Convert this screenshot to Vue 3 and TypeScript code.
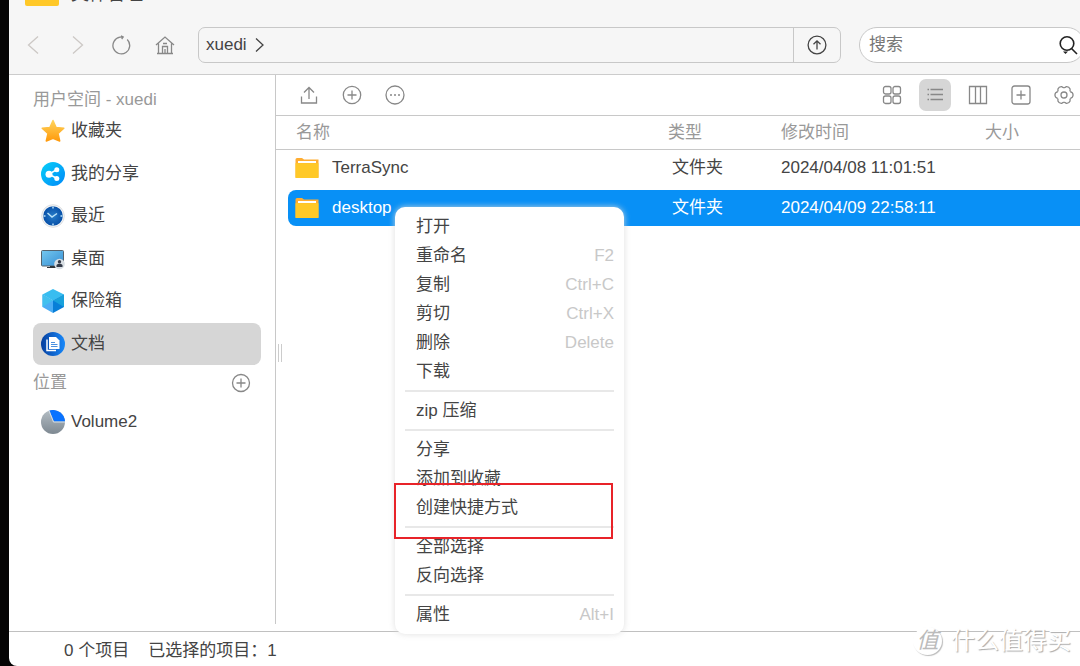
<script setup lang="ts">
import { ref } from 'vue'

interface Place { id: string; label: string }
interface FileRow { name: string; type: string; modified: string; size: string }
interface MenuItem { label: string; shortcut?: string }

const places: Place[] = [
  { id: 'star', label: '收藏夹' },
  { id: 'share', label: '我的分享' },
  { id: 'recent', label: '最近' },
  { id: 'desktop', label: '桌面' },
  { id: 'safe', label: '保险箱' },
  { id: 'docs', label: '文档' },
]
const activePlace = ref('docs')

const files: FileRow[] = [
  { name: 'TerraSync', type: '文件夹', modified: '2024/04/08 11:01:51', size: '' },
  { name: 'desktop', type: '文件夹', modified: '2024/04/09 22:58:11', size: '' },
]
const selected = ref('desktop')

const menuGroups: MenuItem[][] = [
  [
    { label: '打开' },
    { label: '重命名', shortcut: 'F2' },
    { label: '复制', shortcut: 'Ctrl+C' },
    { label: '剪切', shortcut: 'Ctrl+X' },
    { label: '删除', shortcut: 'Delete' },
    { label: '下载' },
  ],
  [{ label: 'zip 压缩' }],
  [{ label: '分享' }, { label: '添加到收藏' }, { label: '创建快捷方式' }],
  [{ label: '全部选择' }, { label: '反向选择' }],
  [{ label: '属性', shortcut: 'Alt+I' }],
]
const query = ref('')
</script>

<template>
  <div class="window">
    <header class="header">
      <div class="titlebar">
        <span class="title-icon"></span>
        <span class="title">文件管理</span>
      </div>
      <div class="navbar">
        <nav class="nav">
          <button class="icon-btn faint" aria-label="后退">
            <svg width="20" height="20" viewBox="0 0 20 20"><path d="M15 1.500 5.500 10l9.500 8.500" /></svg>
          </button>
          <button class="icon-btn faint" aria-label="前进">
            <svg width="20" height="20" viewBox="0 0 20 20"><path d="M6 1.500 15.500 10 6 18.500" /></svg>
          </button>
          <button class="icon-btn" aria-label="刷新">
            <svg width="20" height="20" viewBox="0 0 20 20"><path d="M16.200 4.500A8.400 8.400 0 1 1 9 2.200L12.200 2M10 .8 12.200 2l-1.500 2" /></svg>
          </button>
          <button class="icon-btn" aria-label="主页">
            <svg width="20" height="20" viewBox="0 0 20 20"><path d="M1 10 10 2l9 8M3.500 8.500v10h13v-10M7.500 18.500v-7h5v7M10 18.500V14M8 8.500h4M2 18.500h16" /></svg>
          </button>
        </nav>
        <div class="path">
          <button class="crumb">
            <span>xuedi</span>
            <svg width="10" height="16" viewBox="0 0 10 16"><path d="M1 1.500 8 8l-7 6.500" /></svg>
          </button>
          <button class="up" aria-label="上一级">
            <svg width="20" height="20" viewBox="0 0 20 20"><circle cx="10" cy="10" r="8.900" /><path d="M10 14.500V6M6.500 9.300 10 5.800l3.500 3.500" /></svg>
          </button>
        </div>
        <div class="search">
          <input v-model="query" type="text" placeholder="搜索" aria-label="搜索" />
          <button aria-label="执行搜索">
            <svg width="20" height="20" viewBox="0 0 20 20"><circle cx="9" cy="8.500" r="6.800" /><path d="m13.500 13.500 5.500 5.500" /><path class="solid" d="M5 16.500h5l-2.500 2.500z" /></svg>
          </button>
        </div>
      </div>
    </header>

    <div class="body">
      <aside class="sidebar">
        <h2 class="section">用户空间 - xuedi</h2>
        <div class="places">
          <button
            v-for="p in places"
            :key="p.id"
            class="place"
            :class="{ active: p.id === activePlace }"
            @click="activePlace = p.id"
          >
            <svg v-if="p.id === 'star'" width="24" height="24" viewBox="0 0 24 24">
              <defs><linearGradient id="gs" x2="0" y2="1"><stop stop-color="#ffd45c" /><stop offset="1" stop-color="#ff9a0c" /></linearGradient></defs>
              <path d="M12 1.500l3.100 7 7.700.8-5.800 5.100 1.700 7.600L12 19.300 5.300 22l1.700-7.600L1.200 9.300l7.700-.8z" fill="url(#gs)" stroke="url(#gs)" stroke-width="1.500" stroke-linejoin="round" />
            </svg>
            <svg v-else-if="p.id === 'share'" width="24" height="24" viewBox="0 0 24 24">
              <defs><linearGradient id="gh" x2="1" y2="1"><stop stop-color="#08d0f8" /><stop offset="1" stop-color="#0088f8" /></linearGradient></defs>
              <circle cx="12" cy="12" r="12" fill="url(#gh)" />
              <path d="M16 7.500 8 12.200l8 4.300" fill="none" stroke="#fff" stroke-width="1.500" />
              <circle cx="8" cy="12.200" r="3.500" fill="#fff" /><circle cx="15.800" cy="7.700" r="2.500" fill="#fff" /><circle cx="15.800" cy="16.500" r="2.500" fill="#fff" />
            </svg>
            <svg v-else-if="p.id === 'recent'" width="24" height="24" viewBox="0 0 24 24">
              <defs><radialGradient id="gr"><stop stop-color="#287cc8" /><stop offset="1" stop-color="#0750a8" /></radialGradient></defs>
              <circle cx="12" cy="12" r="11.300" fill="#f4f5f6" stroke="#dcdfe2" /><circle cx="12" cy="12" r="9.800" fill="url(#gr)" />
              <path d="M12 2.500v2M12 19.500v2M2.500 12h2M19.500 12h2M6.500 9 11 13l5-3.500" fill="none" stroke="#b9e2f8" stroke-width="1.500" />
            </svg>
            <svg v-else-if="p.id === 'desktop'" width="24" height="24" viewBox="0 0 24 24">
              <defs><linearGradient id="gd" x2="1" y2="1"><stop stop-color="#75c8ef" /><stop offset="1" stop-color="#358ed4" /></linearGradient></defs>
              <rect x=".5" y="3.500" width="22" height="15.500" rx="1" fill="url(#gd)" stroke="#54636e" />
              <path d="M9 19h5l1 2H6v-1h3z" fill="#30353a" />
              <circle cx="18.500" cy="17" r="5.300" fill="#d8dee3" /><circle cx="18.500" cy="14.800" r="1.700" fill="#343b49" /><path d="M15.500 20v-1.500c0-2.200 6-2.200 6 0V20z" fill="#343b49" />
            </svg>
            <svg v-else-if="p.id === 'safe'" width="24" height="24" viewBox="0 0 24 24">
              <path d="M12 0 23 5.500 12 11.500 1.500 5.500z" fill="#38bdf0" /><path d="M1.500 5.500 12 11.500V24L1.500 18z" fill="#4cadf5" />
              <path d="M23 5.500 12 11.500V24l11-6z" fill="#087ed8" /><path d="M23 5.500 12 11.500l11 6.500z" fill="#18a1dc" /><path d="M1.500 5.500 12 11.500 1.500 18z" fill="#42c0ee" />
            </svg>
            <svg v-else width="24" height="24" viewBox="0 0 24 24">
              <defs><linearGradient id="gf"><stop stop-color="#063f9e" /><stop offset="1" stop-color="#1788fa" /></linearGradient></defs>
              <circle cx="12" cy="12" r="12" fill="url(#gf)" />
              <path d="M6 7.500v11h9" fill="none" stroke="#fff" stroke-width="1.500" /><path d="M8 5h7l3.500 3.500V17H8z" fill="#fff" />
              <path d="M10 10.500h4M10 12.500h6.500M10 14.500h6.500" stroke="#4b91df" stroke-width="1.200" />
            </svg>
            <span>{{ p.label }}</span>
          </button>
        </div>
        <div class="section-row">
          <h2 class="section">位置</h2>
          <button class="add" aria-label="添加位置">
            <svg class="line" width="20" height="20" viewBox="0 0 20 20"><circle cx="10" cy="10" r="8.500" /><path d="M10 5.500v9M5.500 10h9" /></svg>
          </button>
        </div>
        <button class="place volume">
          <svg width="24" height="24" viewBox="0 0 24 24">
            <defs><linearGradient id="gv" x2="0" y2="1"><stop stop-color="#b4bdc4" /><stop offset="1" stop-color="#7e8992" /></linearGradient></defs>
            <circle cx="12" cy="12" r="12" fill="url(#gv)" /><path d="M13 11.500 8.500.5A12 12 0 0 1 24 11.500z" fill="#0872ff" /><path d="M8 .8 12.500 12H24" fill="none" stroke="#d5dfe8" />
          </svg>
          <span>Volume2</span>
        </button>
        <div class="handle"></div>
      </aside>

      <main class="main">
        <div class="toolbar">
          <div class="tools">
            <button class="icon-btn" aria-label="上传">
              <svg width="20" height="20" viewBox="0 0 20 20"><path d="M2.500 11.500V18h15v-6.500M10 14V2.500M5 7.500l5-5 5 5" /></svg>
            </button>
            <button class="icon-btn" aria-label="新建">
              <svg width="20" height="20" viewBox="0 0 20 20"><circle cx="10" cy="10" r="8.700" /><path d="M10 5.500v9M5.500 10h9" /></svg>
            </button>
            <button class="icon-btn" aria-label="更多">
              <svg width="20" height="20" viewBox="0 0 20 20"><circle cx="10" cy="10" r="9" /><path d="M5 10h2M9 10h2M13 10h2" /></svg>
            </button>
          </div>
          <div class="tools">
            <button class="icon-btn" aria-label="图标视图">
              <svg width="20" height="20" viewBox="0 0 20 20"><rect x="1.500" y="1.500" width="7.500" height="7.500" rx="2" /><rect x="11" y="1.500" width="7.500" height="7.500" rx="2" /><rect x="1.500" y="11" width="7.500" height="7.500" rx="2" /><rect x="11" y="11" width="7.500" height="7.500" rx="2" /></svg>
            </button>
            <button class="icon-btn on" aria-label="列表视图">
              <svg width="20" height="20" viewBox="0 0 20 20"><path d="M5.500 4.500H18M5.500 9.500H18M5.500 14.500H18M2.500 4.500H4M2.500 9.500H4M2.500 14.500H4" /></svg>
            </button>
            <button class="icon-btn" aria-label="分栏视图">
              <svg width="20" height="20" viewBox="0 0 20 20"><path d="M1.500 1.500h17v17h-17zM7.500 1.500v17M12.500 1.500v17" /></svg>
            </button>
            <button class="icon-btn" aria-label="新标签">
              <svg width="20" height="20" viewBox="0 0 20 20"><rect x="1" y="1" width="18" height="18" rx="2.500" /><path d="M10 5.500v9M5.500 10h9" /></svg>
            </button>
            <button class="icon-btn" aria-label="设置">
              <svg width="20" height="20" viewBox="0 0 20 20">
                <path v-for="n in 6" :key="n" d="M16.400 6.300Q16.700 7.300 18.200 7.700Q19.900 10 18.200 12.300Q16.700 12.700 16.400 13.700" :transform="`rotate(${n * 60} 10 10)`" />
                <circle cx="10" cy="10" r="3" />
              </svg>
            </button>
          </div>
        </div>
        <table class="files">
          <colgroup><col /><col class="c-type" /><col class="c-time" /><col class="c-size" /></colgroup>
          <thead>
            <tr><th scope="col">名称</th><th scope="col">类型</th><th scope="col">修改时间</th><th scope="col">大小</th></tr>
          </thead>
          <tbody>
            <tr v-for="f in files" :key="f.name" :class="{ selected: f.name === selected }" @click="selected = f.name">
              <td>
                <div class="cell name">
                  <svg width="24" height="24" viewBox="0 0 24 24">
                    <path d="M.5 3.500Q.5 2 2 2h5l2 1.500h14.500v18H.5z" fill="#ffad32" /><path d="M3 5h18v2H3z" fill="#fff" /><path d="M.5 7.200h23V22H.5z" fill="#ffc928" />
                  </svg>
                  <span>{{ f.name }}</span>
                </div>
              </td>
              <td><div class="cell type">{{ f.type }}</div></td>
              <td><div class="cell">{{ f.modified }}</div></td>
              <td><div class="cell">{{ f.size }}</div></td>
            </tr>
          </tbody>
        </table>
      </main>
    </div>

    <footer class="status">
      <span>0 个项目</span>
      <span>已选择的项目：1</span>
    </footer>

    <div class="menu" role="menu">
      <div v-for="(g, i) in menuGroups" :key="i" class="group">
        <button v-for="m in g" :key="m.label" class="item" role="menuitem">
          <span>{{ m.label }}</span>
          <span class="key">{{ m.shortcut }}</span>
        </button>
      </div>
    </div>
    <div class="marker"></div>
    <div class="watermark"><span class="seal">值</span><span>什么值得买</span></div>
  </div>
</template>

<style>
body { margin: 0; background: #050404; }
</style>

<style scoped>
.window {
  position: relative;
  display: flex;
  flex-direction: column;
  min-height: 100vh;
  margin-left: 9px;
  overflow: hidden;
  border-bottom-left-radius: 8px;
  background: #fff;
  color: #444;
  font: 17px/24px "Liberation Sans", "Noto Sans CJK SC", sans-serif;
}
button {
  padding: 0;
  border: 0;
  background: none;
  color: inherit;
  font: inherit;
  text-align: left;
}
svg { display: block; flex: none; }
.header {
  background: #f6f6f6;
  border-bottom: 1px solid #ccc;
}
.titlebar {
  display: flex;
  align-items: flex-end;
  gap: 12px;
  height: 7px;
  padding-left: 16px;
  overflow: hidden;
}
.title-icon {
  width: 34px;
  height: 28px;
  margin-bottom: 1px;
  border-radius: 2px;
  background: #ffc828;
}
.title { font-size: 18px; line-height: 26px; }
.navbar {
  display: flex;
  align-items: center;
  margin-right: -5px;
  padding: 20px 0 11px 8px;
}
.nav { display: flex; gap: 12px; }
.icon-btn {
  display: flex;
  align-items: center;
  justify-content: center;
  width: 32px;
  height: 32px;
  border-radius: 7px;
}
.icon-btn svg, .line {
  fill: none;
  stroke: #888;
  stroke-width: 1.3;
}
.icon-btn.faint svg { stroke: #ccc8c5; }
.icon-btn.on { background: #d6d6d6; }
.path {
  display: flex;
  flex: 1;
  height: 34px;
  margin: 0 18px 0 17px;
  border: 1px solid #c8c8c8;
  border-radius: 7px;
}
.crumb {
  display: flex;
  flex: 1;
  align-items: center;
  gap: 8px;
  padding-left: 7px;
}
.crumb svg, .up svg {
  fill: none;
  stroke: #444;
  stroke-width: 1.3;
}
.up {
  display: flex;
  align-items: center;
  justify-content: center;
  width: 47px;
  border-left: 1px solid #c8c8c8;
}
.search {
  display: flex;
  align-items: center;
  width: 224px;
  height: 34px;
  border: 1px solid #c8c8c8;
  border-radius: 18px;
  background: #fff;
}
.search input {
  flex: 1;
  min-width: 0;
  padding: 0 0 0 9px;
  border: 0;
  outline: 0;
  background: none;
  color: #444;
  font: inherit;
}
.search input::placeholder { color: #777; opacity: 1; }
.search button { margin-right: 6px; }
.search svg { fill: none; stroke: #222; stroke-width: 1.6; }
.search .solid { fill: #222; stroke: none; }
.body { display: flex; flex: 1; }
.sidebar {
  position: relative;
  box-sizing: border-box;
  width: 267px;
  margin-bottom: 7px;
  padding: 13px 14px 0 24px;
  border-right: 1px solid #c8c8c8;
}
.section {
  margin: 0;
  color: #999;
  font-size: 17px;
  font-weight: 400;
  line-height: 24px;
}
.places {
  display: flex;
  flex-direction: column;
  justify-content: space-between;
  height: 255px;
  margin-top: -2px;
}
.place {
  display: flex;
  align-items: center;
  gap: 6px;
  width: 100%;
  height: 42px;
  padding-left: 8px;
  border-radius: 8px;
}
.place.active { background: #d6d6d6; }
.section-row {
  display: flex;
  align-items: center;
  justify-content: space-between;
  padding: 6px 10px 6px 0;
}
.handle {
  position: absolute;
  top: 269px;
  right: -7px;
  width: 2px;
  height: 18px;
  border: solid #ccc;
  border-width: 0 1px;
}
.main { flex: 1; min-width: 0; }
.toolbar {
  display: flex;
  align-items: center;
  justify-content: space-between;
  height: 40px;
  padding-left: 17px;
  border-bottom: 1px solid #c8c8c8;
}
.tools { display: flex; gap: 11px; }
.files {
  width: 100%;
  table-layout: fixed;
  border-spacing: 0;
}
.c-type { width: 113px; }
.c-time { width: 204px; }
.c-size { width: 95px; }
th {
  height: 33px;
  padding: 0;
  border-bottom: 1px solid #c8c8c8;
  color: #999;
  font-weight: 400;
  text-align: left;
}
th:first-child { padding-left: 20px; }
td { padding: 0 0 4px; }
.cell {
  display: flex;
  align-items: center;
  height: 36px;
}
.name {
  gap: 13px;
  margin-left: 12px;
  padding-left: 7px;
  border-radius: 8px 0 0 8px;
}
.type { padding-left: 4px; }
.selected .cell { background: #0890f6; color: #fff; }
.status {
  display: flex;
  gap: 19px;
  padding: 7px 0 3px 55px;
  border-top: 1px solid #c0c0c0;
}
.menu {
  position: absolute;
  top: 207px;
  left: 386px;
  box-sizing: border-box;
  width: 229px;
  padding: 5px 10px;
  border-radius: 10px;
  background: #fff;
  box-shadow: 0 0 6px rgba(220, 220, 220, 0.9);
}
.group + .group {
  margin-top: 4px;
  padding-top: 4px;
  border-top: 2px solid #e8e8e8;
}
.item {
  display: flex;
  align-items: center;
  justify-content: space-between;
  width: 100%;
  height: 29px;
  padding-left: 11px;
}
.key { color: #c8c8c8; }
.marker {
  position: absolute;
  top: 483px;
  left: 385px;
  box-sizing: border-box;
  width: 219px;
  height: 56px;
  border: 2px solid #e82329;
  pointer-events: none;
}
.watermark {
  position: absolute;
  right: 9px;
  bottom: 11px;
  display: flex;
  align-items: center;
  gap: 9px;
  color: #fff;
  font-size: 24px;
  line-height: 28px;
  text-shadow: 1px 1px 1px #aaa;
}
.seal {
  width: 29px;
  border-radius: 50%;
  background: #fff;
  box-shadow: 1px 1px 1px #bbb;
  color: #bbb;
  font-size: 22px;
  font-style: italic;
  text-align: center;
  text-shadow: none;
}
</style>
